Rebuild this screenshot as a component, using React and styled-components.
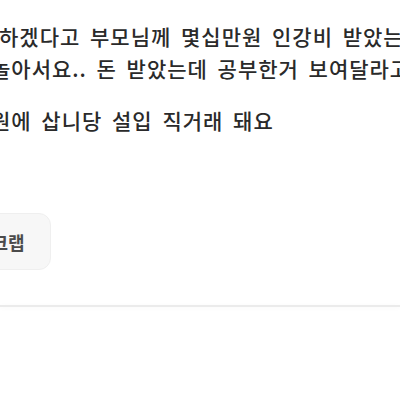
import React from "react";
import styled, { createGlobalStyle } from "styled-components";

const GlobalStyle = createGlobalStyle`
  html, body {
    margin: 0;
    padding: 0;
    background: #ffffff;
  }
  body {
    font-family: "Noto Sans CJK KR", "Noto Sans", sans-serif;
  }
`;

const Page = styled.div`
  width: 400px;
  height: 400px;
  overflow: hidden;
  background: #ffffff;
  display: flex;
  flex-direction: column;
`;

const Body = styled.div`
  padding-top: 20px;
  margin-left: -9px;
`;

const Line = styled.p`
  margin: ${(p) => (p.$gap ? "20px" : "0")} 0 0 ${(p) => p.$indent || 0}px;
  font-size: 21px;
  line-height: 32px;
  font-weight: 500;
  letter-spacing: 1px;
  color: #2a2a2a;
  white-space: nowrap;
  word-spacing: 4px;
`;

const Actions = styled.div`
  display: flex;
  margin-top: 77px;
  margin-left: -51px;
`;

const ScrapButton = styled.button`
  height: 57px;
  padding: 0 25px;
  border: 1px solid #efefef;
  border-radius: 12px;
  background: #f7f7f7;
  color: #4b4b4b;
  font-family: "Noto Sans CJK KR", "Noto Sans", sans-serif;
  font-size: 18px;
  font-weight: 700;
  white-space: nowrap;
`;

const Divider = styled.div`
  margin-top: 35px;
  height: 2px;
  background: #ebebeb;
  box-shadow: 0 1px 4px rgba(0, 0, 0, 0.04);
`;

export default function App() {
  return (
    <Page>
      <GlobalStyle />
      <Body>
        <Line $indent={8}>하겠다고 부모님께 몇십만원 인강비 받았는데</Line>
        <Line>놀아서요.. 돈 받았는데 공부한거 보여달라고 하셔서</Line>
        <Line $gap>원에 삽니당 설입 직거래 돼요</Line>
      </Body>
      <Actions>
        <ScrapButton>스크랩</ScrapButton>
      </Actions>
      <Divider />
    </Page>
  );
}
